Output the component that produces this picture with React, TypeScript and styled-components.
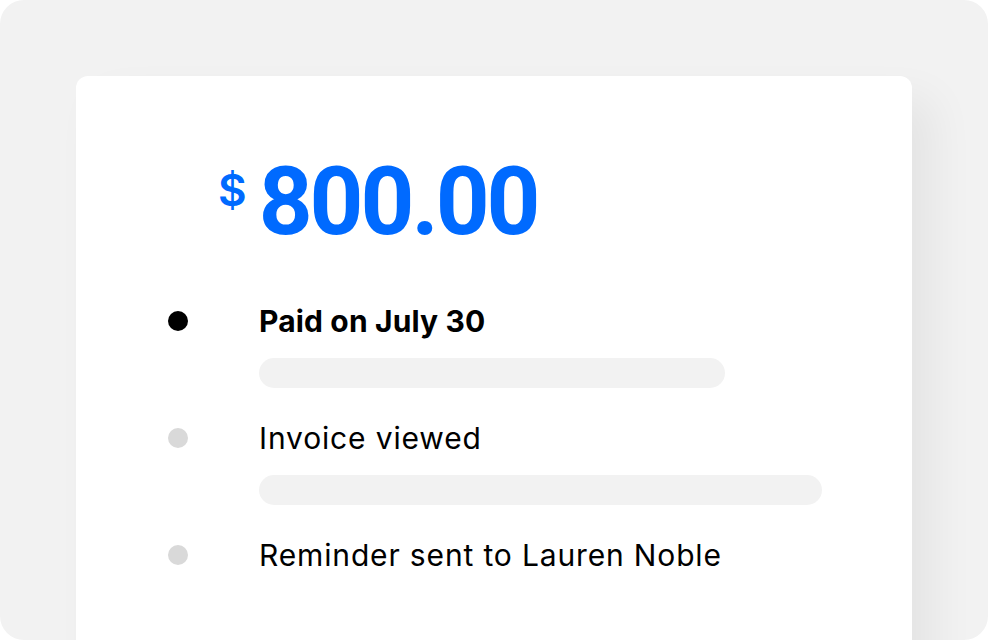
import React from "react";
import styled, { createGlobalStyle } from "styled-components";

const Global = createGlobalStyle`
  html, body { margin: 0; padding: 0; background: #ffffff; }
  body { font-family: Inter, "Noto Sans", sans-serif; }
`;

const Frame = styled.div`
  width: 988px;
  height: 640px;
  box-sizing: border-box;
  background: #f2f2f2;
  border-radius: 24px;
  overflow: hidden;
  padding: 76px 76px 0 76px;
`;

const Card = styled.div`
  background: #ffffff;
  border-radius: 12px;
  height: 640px;
  box-sizing: border-box;
  padding: 79px 0 0 92px;
  box-shadow: 22px 22px 44px rgba(0, 0, 0, 0.06);
`;

const Amount = styled.div`
  display: flex;
  align-items: flex-start;
  margin-left: 50px;
  color: #006aff;
`;

const Currency = styled.span`
  font-size: 44px;
  line-height: 44px;
  font-weight: 600;
  margin-top: 13px;
  margin-right: 12px;
`;

const Value = styled.span`
  font-family: Roboto, Inter, sans-serif;
  font-size: 94px;
  line-height: 92px;
  font-weight: 700;
  letter-spacing: -3px;
  margin-top: 1px;
`;

const Timeline = styled.div`
  display: flex;
  flex-direction: column;
  gap: 32px;
  margin-top: 55px;
`;

const Item = styled.div`
  display: grid;
  grid-template-columns: 20px 1fr;
  column-gap: 71px;
  row-gap: 19px;
  align-items: center;
`;

const Dot = styled.span<{ $active?: boolean }>`
  width: 20px;
  height: 20px;
  border-radius: 50%;
  background: ${(p) => (p.$active ? "#000000" : "#d9d9d9")};
`;

const Label = styled.div<{ $bold?: boolean }>`
  font-size: 30px;
  line-height: 36px;
  font-weight: ${(p) => (p.$bold ? 700 : 400)};
  color: #000000;
  letter-spacing: ${(p) => (p.$bold ? "0.15px" : "0.85px")};
`;

const Bar = styled.div<{ $width: number }>`
  grid-column: 2;
  height: 30px;
  width: ${(p) => p.$width}px;
  border-radius: 15px;
  background: #f2f2f2;
`;

export default function App() {
  return (
    <>
      <Global />
      <Frame>
        <Card>
          <Amount>
            <Currency>$</Currency>
            <Value>800.00</Value>
          </Amount>
          <Timeline>
            <Item>
              <Dot $active />
              <Label $bold>Paid on July 30</Label>
              <Bar $width={466} />
            </Item>
            <Item>
              <Dot />
              <Label>Invoice viewed</Label>
              <Bar $width={563} />
            </Item>
            <Item>
              <Dot />
              <Label>Reminder sent to Lauren Noble</Label>
            </Item>
          </Timeline>
        </Card>
      </Frame>
    </>
  );
}
